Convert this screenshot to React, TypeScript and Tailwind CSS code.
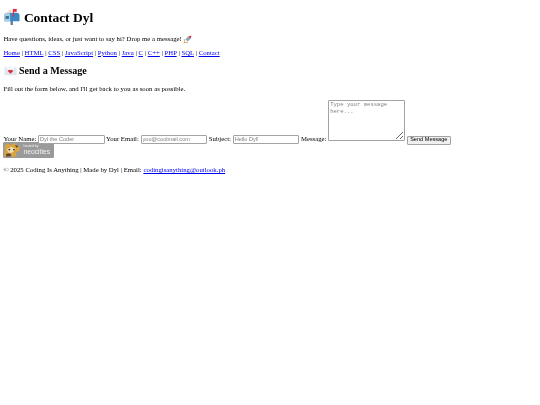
const Mailbox = () => (
  <svg viewBox="0 0 36 36" className="inline-block w-[17px] h-[17px] align-[1px] mr-[3.5px] -my-[4px]">
    <rect x="16" y="24" width="5" height="12" fill="#5b7f9c" />
    <path d="M9 10h20a6 6 0 0 1 6 6v12H3V16a6 6 0 0 1 6-6z" fill="#3b88c3" />
    <path d="M3 16a6 6 0 0 1 12 0v12H3z" fill="#a9cfe6" />
    <rect x="5.5" y="17" width="7" height="6" fill="#3b6e8f" />
    <rect x="21" y="2" width="2.5" height="16" fill="#dd2e44" />
    <rect x="21" y="2" width="8" height="6" fill="#dd2e44" />
    <rect x="12" y="4" width="6" height="7" fill="#e8dcc8" />
  </svg>
);

const Rocket = () => (
  <svg viewBox="0 0 36 36" className="inline-block w-[9px] h-[9px] align-[-1.5px] ml-[1.5px] -my-[2px]">
    <path d="M6 24l-4 10 10-4z" fill="#f4900c" />
    <path d="M9 17l-6 2 4 5zM19 27l-2 6-5-4z" fill="#c1694f" />
    <path d="M33 3c-9 0-17 5-23 15l8 8c10-6 15-14 15-23z" fill="#99aab5" />
    <path d="M33 3c-4 0-8 1-11 3l8 8c2-3 3-7 3-11z" fill="#dd2e44" />
    <circle cx="20" cy="16" r="3" fill="#55acee" />
  </svg>
);

const Letter = () => (
  <svg viewBox="0 0 36 28" className="inline-block w-[13px] h-[10px] align-[-0.5px] ml-[0.5px] mr-[2px] -my-[2px]">
    <rect x="1" y="2" width="34" height="24" fill="#e1e8ed" />
    <path d="M1 2l17 13L35 2z" fill="#f5f8fa" />
    <path d="M18 22l-7-7a4 4 0 0 1 7-3 4 4 0 0 1 7 3z" fill="#dd2e44" />
  </svg>
);

const NeocitiesBadge = () => (
  <div className="flex h-[16px] w-[51px] items-center rounded-[1.5px] bg-[#9a9a9a] overflow-hidden">
    <svg viewBox="0 0 22 17" className="w-[20px] h-[16px] shrink-0">
      <path d="M2 4l3-3 3 2 5-2 3 3 3 1-1 5-4 1 1 5H9l-1-3-3 3H1l1-6z" fill="#d9a441" />
      <path d="M4 8l5-3 5 2-3 4-4 1z" fill="#f1dfae" />
      <path d="M3 13l5-1 1 3-5 1zM13 3l4 1-2 2z" fill="#5a4630" />
      <circle cx="7" cy="8" r="1" fill="#3a2a1a" />
      <circle cx="12" cy="8" r="1" fill="#3a2a1a" />
    </svg>
    <div className="flex flex-col text-[#f2f2f2] font-['Liberation_Sans',sans-serif]">
      <span className="text-[3.5px] leading-[4px]">hosted by</span>
      <span className="text-[6.8px] leading-[7px]">neocities</span>
    </div>
  </div>
);

const links = ["Home", "HTML", "CSS", "JavaScript", "Python", "Java", "C", "C++", "PHP", "SQL", "Contact"];
const fieldClass =
  "w-[66.6px] h-[9px] px-[1px] border-[0.84px] border-solid border-[#a3a3a3] rounded-[1px] bg-white text-[5.6px] font-['Liberation_Sans',sans-serif] placeholder:text-[#808080] outline-none";
const pClass = "my-[6.75px] text-[6.75px] leading-[7.6px]";
const linkClass = "text-[#0000ee] underline";

export default function App() {
  return (
    <div className="min-h-[405px] bg-white px-[3.375px] py-[2px] text-[6.75px] leading-[7.6px] text-black font-['Liberation_Serif',serif] blur-[0.2px]">
      <h1 className="mt-[8px] mb-[9px] text-[13.5px] leading-[15.6px] font-bold">
        <Mailbox />
        Contact Dyl
      </h1>
      <p className={pClass}>
        Have questions, ideas, or just want to say hi? Drop me a message!
        <Rocket />
      </p>
      <p className={pClass}>
        {links.map((l, i) => (
          <span key={l}>
            {i > 0 && " | "}
            <a href="#" className={linkClass}>{l}</a>
          </span>
        ))}
      </p>
      <h2 className="mt-[8.4px] mb-[8.4px] text-[10.1px] leading-[11.6px] font-bold">
        <Letter />
        Send a Message
      </h2>
      <p className={pClass}>Fill out the form below, and I'll get back to you as soon as possible.</p>
      <form className="mt-[7.75px]">
        <label>Your Name: </label>
        <input className={fieldClass} placeholder="Dyl the Coder" />{" "}
        <label>Your Email: </label>
        <input className={fieldClass} placeholder="you@coolmail.com" />{" "}
        <label>Subject: </label>
        <input className={fieldClass} placeholder="Hello Dyl!" />{" "}
        <label>Message: </label>
        <textarea
          className="w-[77px] h-[41px] px-[1px] py-px border-[0.84px] border-solid border-[#a3a3a3] rounded-[1px] bg-white text-[5.6px] leading-[6.4px] font-['Liberation_Mono',monospace] placeholder:text-[#808080] outline-none"
          placeholder="Type your message here..."
        />{" "}
        <button
          type="button"
          className="h-[9px] w-[44px] border-[0.84px] border-solid border-[#a3a3a3] rounded-[1px] bg-[#efefef] text-[5.6px] leading-none text-black font-['Liberation_Sans',sans-serif]"
        >
          Send Message
        </button>
      </form>
      <div className="-mt-[3px] mb-[8.75px]">
        <NeocitiesBadge />
      </div>
      <p className={pClass}>
        © 2025 Coding Is Anything | Made by Dyl | Email:{" "}
        <a href="#" className={linkClass}>codingisanything@outlook.ph</a>
      </p>
    </div>
  );
}
